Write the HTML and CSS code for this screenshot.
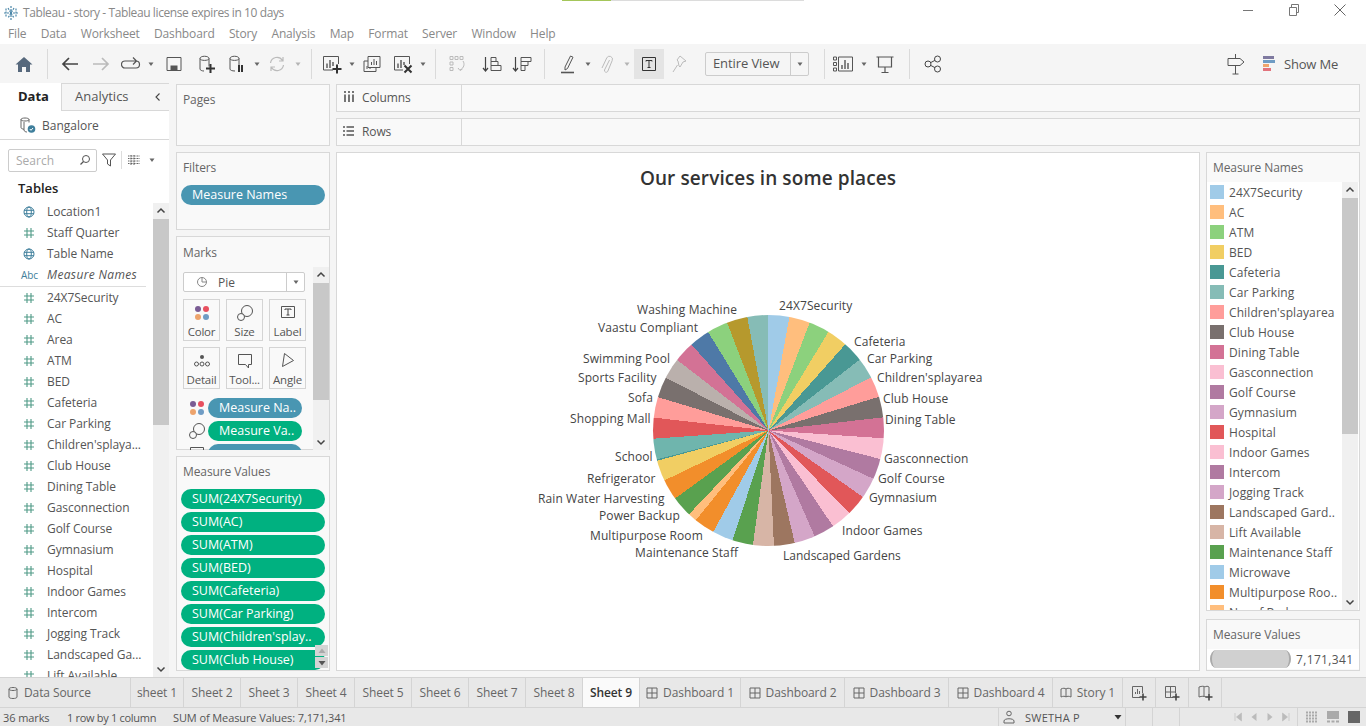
FILE: index.html
```html
<!DOCTYPE html>

<html>
  <head>
    <meta charset="utf-8" />
    <title>Tableau - story</title>
    <link rel="stylesheet" href="styles.css">
  </head>

  <body>
    <svg class="defs" width="0" height="0">
      <symbol id="hash" viewBox="0 0 12 12">
        <path d="M4 1v10M8 1v10M1 4h10M1 8h10" fill="none" stroke="#4f9a86" stroke-width="1.1"/>
      </symbol>
      <symbol id="globe" viewBox="0 0 12 12">
        <g fill="none" stroke="#3f7f9c" stroke-width="1">
          <circle cx="6" cy="6" r="5"/>
          <ellipse cx="6" cy="6" rx="2.3" ry="5"/>
          <path d="M1 4.3h10M1 7.7h10"/>
        </g>
      </symbol>
      <symbol id="up" viewBox="0 0 10 10">
        <path d="M1.5 6.5L5 3l3.5 3.5" fill="none" stroke="#444" stroke-width="1.5"/>
      </symbol>
      <symbol id="down" viewBox="0 0 10 10">
        <path d="M1.5 3.5L5 7l3.5-3.5" fill="none" stroke="#444" stroke-width="1.5"/>
      </symbol>
      <symbol id="dash" viewBox="0 0 12 12">
        <path d="M1 1h10v10H1zM6 1v10M1 6h10" fill="none" stroke="#666" stroke-width="1"/>
      </symbol>
      <symbol id="book" viewBox="0 0 12 12">
        <path d="M1 2c2-1 4-1 5 0c1-1 3-1 5 0v8c-2-1-4-1-5 0c-1-1-3-1-5 0zM6 2v8" fill="none" stroke="#666" stroke-width="1"/>
      </symbol>
      <symbol id="dd" viewBox="0 0 8 8">
        <path d="M1.5 2.5h5L4 6z" fill="#666"/>
      </symbol>
    </svg>

    <div class="app">
      <header class="titlebar">
        <svg class="logo" width="16" height="16" viewBox="0 0 16 16">
          <path d="M8 1v14M1 8h14M3 3.500v9M13 3.500v9M5 3l6 10M11 3L5 13" fill="none" stroke="#4a86a8" stroke-width="1.200" stroke-dasharray="2 1"/>
        </svg>
        <span class="app-title">Tableau - story - Tableau license expires in 10 days</span>
        <div class="progress"><div class="progress-done"></div></div>
        <div class="win-controls">
          <svg width="12" height="12" viewBox="0 0 12 12"><path d="M1 6.500h10" stroke="#777"/></svg>
          <svg width="12" height="12" viewBox="0 0 12 12"><path d="M1.500 3.500h7v8h-7zM3.500 3.500V.5h7v8h-2" fill="none" stroke="#777"/></svg>
          <svg width="12" height="12" viewBox="0 0 12 12"><path d="M.5.5l11 11M11.500.5l-11 11" stroke="#666"/></svg>
        </div>
      </header>

      <nav class="menubar">
        <span>File</span><span>Data</span><span>Worksheet</span><span>Dashboard</span><span>Story</span><span>Analysis</span><span>Map</span><span>Format</span><span>Server</span><span>Window</span><span>Help</span>
      </nav>

      <div class="toolbar">
        <div class="tool tool-first">
          <svg width="20" height="20" viewBox="0 0 20 20"><path d="M1.500 10.500L10 3l8.500 7.500H16V18h-4v-5H8v5H4v-7.500z" fill="#56687c"/></svg>
        </div>
        <i class="sep sep-home"></i>
        <div class="tool">
          <svg width="20" height="20" viewBox="0 0 20 20"><path d="M18 10H3M9 4l-6 6 6 6" fill="none" stroke="#444" stroke-width="1.700"/></svg>
        </div>
        <div class="tool tool-fwd">
          <svg width="20" height="20" viewBox="0 0 20 20"><path d="M2 10h15M11 4l6 6-6 6" fill="none" stroke="#bbb" stroke-width="1.700"/></svg>
        </div>
        <div class="tool">
          <svg width="20" height="20" viewBox="0 0 20 20"><path d="M4 7h11a3.500 3.500 0 0 1 0 7H4a3.500 3.500 0 0 1 0-7M12 3.500L15.500 7 12 10.500" fill="none" stroke="#555" stroke-width="1.200"/></svg>
        </div>
        <div class="drop"><svg width="8" height="8"><use href="#dd"/></svg></div>
        <div class="tool tool-gap">
          <svg width="18" height="18" viewBox="0 0 18 18"><path d="M2 2.500h14v13H2z" fill="none" stroke="#555"/><path d="M5.500 10.500h7v5h-7z" fill="#555"/></svg>
        </div>
        <div class="tool tool-gap">
          <svg width="20" height="20" viewBox="0 0 20 20"><path d="M3 4.500c0-3 9-3 9 0v8M3 4.500c0 2.500 9 2.500 9 0M3 4.500V15c0 1.200 2 2 4 2" fill="none" stroke="#555"/><path d="M13.500 10v9M9 14.500h9" stroke="#333" stroke-width="2"/></svg>
        </div>
        <div class="tool">
          <svg width="20" height="20" viewBox="0 0 20 20"><path d="M3 4.500c0-3 9-3 9 0v8M3 4.500c0 2.500 9 2.500 9 0M3 4.500V15c0 1.200 2 2 5 2" fill="none" stroke="#555"/><path d="M12 11v7M15 11v7" stroke="#333" stroke-width="2"/></svg>
        </div>
        <div class="drop"><svg width="8" height="8"><use href="#dd"/></svg></div>
        <div class="tool">
          <svg width="20" height="20" viewBox="0 0 20 20"><path d="M3.500 9a6.500 6.500 0 0 1 12-2.500M16.500 11a6.500 6.500 0 0 1-12 2.500M16 3v4h-4M4 17v-4h4" fill="none" stroke="#bbb" stroke-width="1.200"/></svg>
        </div>
        <div class="drop drop-off"><svg width="8" height="8"><use href="#dd"/></svg></div>
        <i class="sep sep-chart"></i>
        <div class="tool">
          <svg width="20" height="20" viewBox="0 0 20 20"><path d="M11 16H1.500V2.500h15V10" fill="none" stroke="#555"/><path d="M5 9.500V14M8 6v8M11 8v4" stroke="#555" stroke-width="1.400"/><path d="M15 10.500v9M10.500 15h9" stroke="#333" stroke-width="2"/></svg>
        </div>
        <div class="drop"><svg width="8" height="8"><use href="#dd"/></svg></div>
        <div class="tool">
          <svg width="20" height="20" viewBox="0 0 20 20"><path d="M6 2.500h12v11H6zM6 7H2v10.500h12v-4" fill="none" stroke="#555"/><path d="M9.500 11V8M12 11V5M14.500 11V7M5 15v-3M8 15v-2" stroke="#555"/></svg>
        </div>
        <div class="tool tool-near">
          <svg width="20" height="20" viewBox="0 0 20 20"><path d="M10 16H1.500V2.500h15V10" fill="none" stroke="#555"/><path d="M5 9.500V14M8 6v8M11 8v3" stroke="#555" stroke-width="1.400"/><path d="M11.500 11.500l7 7M18.500 11.500l-7 7" stroke="#333" stroke-width="2"/></svg>
        </div>
        <div class="drop"><svg width="8" height="8"><use href="#dd"/></svg></div>
        <i class="sep"></i>
        <div class="tool">
          <svg width="20" height="20" viewBox="0 0 20 20"><path d="M3 2.500h3v3H3zM8 2.500h3v3H8zM13 2.500h3v3h-3zM3 8h3v3H3zM3 13.500h3v3H3z" fill="none" stroke="#bbb"/><path d="M16 7c2 3 1 7-3 9M11 14l2 2.500 2.500-1.500" fill="none" stroke="#bbb"/></svg>
        </div>
        <div class="tool tool-sort">
          <svg width="20" height="20" viewBox="0 0 20 20"><path d="M3.500 3v14M1 14l2.500 3L6 14" fill="none" stroke="#444" stroke-width="1.200"/><path d="M9 3.500h5v4H9zM9 7.500h7v4H9zM9 11.500h10v5H9z" fill="none" stroke="#555"/></svg>
        </div>
        <div class="tool">
          <svg width="20" height="20" viewBox="0 0 20 20"><path d="M3.500 3v14M1 14l2.500 3L6 14" fill="none" stroke="#444" stroke-width="1.200"/><path d="M9 3.500h10v4H9zM9 7.500h7v4H9zM9 11.500h4v5H9z" fill="none" stroke="#555"/></svg>
        </div>
        <i class="sep sep-sort"></i>
        <div class="tool tool-pen">
          <svg width="20" height="20" viewBox="0 0 20 20"><path d="M7 13L12.500 2l2.500 1.200L9.500 14.500 7 16z" fill="none" stroke="#555"/><path d="M3 18.500h13" stroke="#555" stroke-width="1.600"/></svg>
        </div>
        <div class="drop"><svg width="8" height="8"><use href="#dd"/></svg></div>
        <div class="tool tool-clip">
          <svg width="20" height="20" viewBox="0 0 20 20"><path d="M13.500 6l-5 10a1.800 1.800 0 0 0 3.200 1.500l4.500-11a3 3 0 0 0-5.500-2.500L6 14" fill="none" stroke="#bbb"/></svg>
        </div>
        <div class="drop drop-off"><svg width="8" height="8"><use href="#dd"/></svg></div>
        <div class="tool tool-on">
          <svg width="18" height="18" viewBox="0 0 18 18"><path d="M2.500 2.500h13v13h-13z" fill="none" stroke="#333"/><path d="M6 6.500V5.500h6v1M9 5.500v7M7.500 12.500h3" fill="none" stroke="#333"/></svg>
        </div>
        <div class="tool">
          <svg width="20" height="20" viewBox="0 0 20 20"><path d="M11 2l6 5-3 1-3 5-1-1-1-5-1-1zM8.500 11L4 18" fill="none" stroke="#bbb"/></svg>
        </div>
        <div class="fit-select">
          <span class="fit-value">Entire View</span>
          <span class="fit-arrow"><svg width="8" height="8"><use href="#dd"/></svg></span>
        </div>
        <i class="sep sep-fit"></i>
        <div class="tool">
          <svg width="22" height="20" viewBox="0 0 22 20"><path d="M1.500 3h3v3h-3zM1.500 8.500h3v3h-3zM1.500 14h3v3h-3zM6.500 3h14v14h-14z" fill="none" stroke="#555"/><path d="M10 15v-4M13 15V6M16 15v-6" stroke="#555" stroke-width="1.400"/></svg>
        </div>
        <div class="drop drop-view"><svg width="8" height="8"><use href="#dd"/></svg></div>
        <div class="tool">
          <svg width="20" height="20" viewBox="0 0 20 20"><path d="M1.500 3h17M3.500 3v10h13V3M10 13v5M6.500 18.500h7" fill="none" stroke="#555" stroke-width="1.200"/></svg>
        </div>
        <i class="sep sep-share"></i>
        <div class="tool tool-share">
          <svg width="20" height="20" viewBox="0 0 20 20"><g fill="none" stroke="#444"><circle cx="5" cy="10" r="3"/><circle cx="14.500" cy="5" r="3"/><circle cx="14.500" cy="15" r="3"/><path d="M7.700 8.600l4.200-2.200M7.700 11.400l4.200 2.200"/></g></svg>
        </div>
        <div class="tool-right">
          <svg width="20" height="22" viewBox="0 0 20 22"><path d="M2 5.500h12l4 3.500-4 3.500H2zM9.500 1v4.500M9.500 12.500V21M6.500 21h6" fill="none" stroke="#555"/></svg>
          <div class="show-me">
            <svg width="12" height="20" viewBox="0 0 12 20"><path d="M0 2h11v3H0z" fill="#7f7aa0"/><path d="M0 6h14v3H0z" fill="#6f9cc4"/><path d="M0 10h6v3H0z" fill="#efa56c"/><path d="M0 14h8v3H0z" fill="#e2737c"/></svg>
            <span>Show Me</span>
          </div>
        </div>
      </div>

      <main class="workspace">
        <aside class="data-pane">
          <div class="pane-tabs">
            <div class="pane-tab pane-tab-on">Data</div>
            <div class="pane-tab">Analytics</div>
            <div class="pane-collapse">
              <svg width="10" height="10" viewBox="0 0 10 10"><path d="M6.500 1.500L3 5l3.500 3.500" fill="none" stroke="#444" stroke-width="1.100"/></svg>
            </div>
          </div>
          <div class="source">
            <svg width="18" height="18" viewBox="0 0 18 18"><path d="M2 3.500c0-2 8-2 8 0v3M2 3.500c0 2 8 2 8 0M2 3.500v8c0 1 1.500 1.500 3 1.800M5 6v8c0 1.500 2 2 3 2" fill="none" stroke="#666"/><circle cx="12.500" cy="13" r="3.800" fill="#3f7f9c"/><path d="M10.800 13l1.200 1.300 2-2.300" fill="none" stroke="#fff"/></svg>
            <span>Bangalore</span>
          </div>
          <div class="search-row">
            <div class="search">
              <span>Search</span>
              <svg width="12" height="12" viewBox="0 0 12 12"><circle cx="7" cy="5" r="3.500" fill="none" stroke="#555"/><path d="M4.500 7.500L1.500 10.500" stroke="#555" stroke-width="1.300"/></svg>
            </div>
            <svg class="funnel" width="14" height="14" viewBox="0 0 14 14"><path d="M.5 1h13L8.500 7v6l-3-2V7z" fill="none" stroke="#555"/></svg>
            <i class="search-sep"></i>
            <svg class="rows-icon" width="12" height="10" viewBox="0 0 12 10"><path d="M0 1h12M0 3.500h12M0 6h12M0 8.500h12M3 0v10M6 0v10" stroke="#666" stroke-dasharray="1 .5"/></svg>
            <svg class="rows-drop" width="8" height="8"><use href="#dd"/></svg>
          </div>
          <div class="tables-head">Tables</div>
          <div class="fields-wrap">
            <ul class="fields">
              <li><svg width="12" height="12"><use href="#globe"/></svg>Location1</li>
              <li><svg width="12" height="12"><use href="#hash"/></svg>Staff Quarter</li>
              <li><svg width="12" height="12"><use href="#globe"/></svg>Table Name</li>
              <li class="field-names"><b>Abc</b><em>Measure Names</em></li>
              <li><svg width="12" height="12"><use href="#hash"/></svg>24X7Security</li>
              <li><svg width="12" height="12"><use href="#hash"/></svg>AC</li>
              <li><svg width="12" height="12"><use href="#hash"/></svg>Area</li>
              <li><svg width="12" height="12"><use href="#hash"/></svg>ATM</li>
              <li><svg width="12" height="12"><use href="#hash"/></svg>BED</li>
              <li><svg width="12" height="12"><use href="#hash"/></svg>Cafeteria</li>
              <li><svg width="12" height="12"><use href="#hash"/></svg>Car Parking</li>
              <li><svg width="12" height="12"><use href="#hash"/></svg>Children'splaya...</li>
              <li><svg width="12" height="12"><use href="#hash"/></svg>Club House</li>
              <li><svg width="12" height="12"><use href="#hash"/></svg>Dining Table</li>
              <li><svg width="12" height="12"><use href="#hash"/></svg>Gasconnection</li>
              <li><svg width="12" height="12"><use href="#hash"/></svg>Golf Course</li>
              <li><svg width="12" height="12"><use href="#hash"/></svg>Gymnasium</li>
              <li><svg width="12" height="12"><use href="#hash"/></svg>Hospital</li>
              <li><svg width="12" height="12"><use href="#hash"/></svg>Indoor Games</li>
              <li><svg width="12" height="12"><use href="#hash"/></svg>Intercom</li>
              <li><svg width="12" height="12"><use href="#hash"/></svg>Jogging Track</li>
              <li><svg width="12" height="12"><use href="#hash"/></svg>Landscaped Ga...</li>
              <li><svg width="12" height="12"><use href="#hash"/></svg>Lift Available</li>
            </ul>
            <div class="scroll">
              <div class="scroll-arrow"><svg width="10" height="10"><use href="#up"/></svg></div>
              <div class="thumb thumb-fields"></div>
              <div class="scroll-rest"></div>
              <div class="scroll-arrow"><svg width="10" height="10"><use href="#down"/></svg></div>
            </div>
          </div>
        </aside>

        <section class="cards">
          <div class="card card-pages"><h4>Pages</h4></div>
          <div class="card card-filters">
            <h4>Filters</h4>
            <div class="pill pill-blue">Measure Names</div>
          </div>
          <div class="card card-marks">
            <h4>Marks</h4>
            <div class="marks-body">
              <div class="marks-main">
                <div class="mark-type">
                  <svg width="14" height="14" viewBox="0 0 14 14"><circle cx="7" cy="7" r="4.500" fill="none" stroke="#888"/><path d="M7 2.500V7h4.500" fill="none" stroke="#888"/></svg>
                  <span>Pie</span>
                  <i class="mark-arrow"><svg width="8" height="8"><use href="#dd"/></svg></i>
                </div>
                <div class="mark-grid">
                  <div class="mark-btn">
                    <svg width="18" height="18" viewBox="0 0 18 18"><circle cx="5" cy="5" r="3" fill="#7a5c94"/><circle cx="13" cy="5" r="3" fill="#e8505f"/><circle cx="5" cy="13" r="3" fill="#eda36c"/><circle cx="13" cy="13" r="3" fill="#6f9cc4"/></svg>
                    <span>Color</span>
                  </div>
                  <div class="mark-btn">
                    <svg width="18" height="18" viewBox="0 0 18 18"><circle cx="11" cy="7" r="5.500" fill="none" stroke="#555"/><circle cx="5" cy="13" r="3.500" fill="#fafafa" stroke="#555"/></svg>
                    <span>Size</span>
                  </div>
                  <div class="mark-btn">
                    <svg width="18" height="18" viewBox="0 0 18 18"><path d="M2.500 2.500h13v11h-13z" fill="none" stroke="#555"/><path d="M6 6V5h6v1M9 5v6M7.500 11h3" fill="none" stroke="#444"/></svg>
                    <span>Label</span>
                  </div>
                  <div class="mark-btn">
                    <svg width="18" height="18" viewBox="0 0 18 18"><circle cx="9" cy="5" r="2" fill="#555"/><g fill="none" stroke="#555"><circle cx="3.500" cy="12" r="2"/><circle cx="9" cy="12" r="2"/><circle cx="14.500" cy="12" r="2"/></g></svg>
                    <span>Detail</span>
                  </div>
                  <div class="mark-btn">
                    <svg width="18" height="18" viewBox="0 0 18 18"><path d="M2.500 2.500h13v10h-3v3.500l-3-3.500h-7z" fill="none" stroke="#555"/></svg>
                    <span>Tool...</span>
                  </div>
                  <div class="mark-btn">
                    <svg width="18" height="18" viewBox="0 0 18 18"><path d="M5.500 1.500l9 7-11 6z" fill="none" stroke="#555"/></svg>
                    <span>Angle</span>
                  </div>
                </div>
                <div class="mark-pill-row">
                  <svg width="18" height="18" viewBox="0 0 18 18"><circle cx="5" cy="5" r="3" fill="#7a5c94"/><circle cx="13" cy="5" r="3" fill="#e8505f"/><circle cx="5" cy="13" r="3" fill="#eda36c"/><circle cx="13" cy="13" r="3" fill="#6f9cc4"/></svg>
                  <div class="pill pill-blue">Measure Na..</div>
                </div>
                <div class="mark-pill-row">
                  <svg width="18" height="18" viewBox="0 0 18 18"><circle cx="11" cy="7" r="5.500" fill="none" stroke="#555"/><circle cx="5" cy="13" r="3.500" fill="#fafafa" stroke="#555"/></svg>
                  <div class="pill pill-green">Measure Va..</div>
                </div>
                <div class="mark-pill-row">
                  <svg width="18" height="18" viewBox="0 0 18 18"><path d="M2.500 2.500h13v11h-13z" fill="none" stroke="#555"/></svg>
                  <div class="pill pill-blue">&nbsp;</div>
                </div>
              </div>
              <div class="scroll scroll-marks">
                <div class="scroll-arrow"><svg width="10" height="10"><use href="#up"/></svg></div>
                <div class="thumb thumb-marks"></div>
                <div class="scroll-rest"></div>
                <div class="scroll-arrow"><svg width="10" height="10"><use href="#down"/></svg></div>
              </div>
            </div>
          </div>
          <div class="card card-values">
            <h4>Measure Values</h4>
            <div class="value-pills">
              <div class="pill pill-green">SUM(24X7Security)</div>
              <div class="pill pill-green">SUM(AC)</div>
              <div class="pill pill-green">SUM(ATM)</div>
              <div class="pill pill-green">SUM(BED)</div>
              <div class="pill pill-green">SUM(Cafeteria)</div>
              <div class="pill pill-green">SUM(Car Parking)</div>
              <div class="pill pill-green">SUM(Children'splay..</div>
              <div class="pill pill-green">SUM(Club House)</div>
            </div>
            <div class="mini-scroll">
              <div class="mini-arrow"><svg width="8" height="8" viewBox="0 0 8 8"><path d="M4 1.500L7.500 6H.5z" fill="#aaa"/></svg></div>
              <div class="mini-arrow"><svg width="8" height="8" viewBox="0 0 8 8"><path d="M4 6.500L7.500 2H.5z" fill="#555"/></svg></div>
            </div>
          </div>
        </section>

        <section class="center">
          <div class="shelf">
            <div class="shelf-label">
              <svg width="12" height="12" viewBox="0 0 12 12"><path d="M2 3.500V11M6 3.500V11M10 3.500V11M2 0v2M6 0v2M10 0v2" stroke="#555" stroke-width="1.600"/></svg>
              <span>Columns</span>
            </div>
            <div class="shelf-drop"></div>
          </div>
          <div class="shelf">
            <div class="shelf-label">
              <svg width="12" height="12" viewBox="0 0 12 12"><path d="M3.500 2H11M3.500 6H11M3.500 10H11M0 2h2M0 6h2M0 10h2" stroke="#555" stroke-width="1.600"/></svg>
              <span>Rows</span>
            </div>
            <div class="shelf-drop"></div>
          </div>

          <div class="view-row">
            <div class="view">
              <h2 class="view-title">Our services in some places</h2>
              <div class="plot">
                <div class="pie"></div>
                <span class="pie-label lb-washing">Washing Machine</span>
                <span class="pie-label lb-security">24X7Security</span>
                <span class="pie-label lb-vaastu">Vaastu Compliant</span>
                <span class="pie-label lb-cafeteria">Cafeteria</span>
                <span class="pie-label lb-car">Car Parking</span>
                <span class="pie-label lb-swimming">Swimming Pool</span>
                <span class="pie-label lb-children">Children'splayarea</span>
                <span class="pie-label lb-sports">Sports Facility</span>
                <span class="pie-label lb-sofa">Sofa</span>
                <span class="pie-label lb-club">Club House</span>
                <span class="pie-label lb-shopping">Shopping Mall</span>
                <span class="pie-label lb-dining">Dining Table</span>
                <span class="pie-label lb-school">School</span>
                <span class="pie-label lb-gas">Gasconnection</span>
                <span class="pie-label lb-fridge">Refrigerator</span>
                <span class="pie-label lb-golf">Golf Course</span>
                <span class="pie-label lb-gym">Gymnasium</span>
                <span class="pie-label lb-rain">Rain Water Harvesting</span>
                <span class="pie-label lb-power">Power Backup</span>
                <span class="pie-label lb-indoor">Indoor Games</span>
                <span class="pie-label lb-multi">Multipurpose Room</span>
                <span class="pie-label lb-staff">Maintenance Staff</span>
                <span class="pie-label lb-gardens">Landscaped Gardens</span>
              </div>
            </div>

            <div class="legends">
              <div class="card legend-names">
                <h4>Measure Names</h4>
                <div class="legend-body">
                  <ul class="legend-list">
                    <li><i class="sw c-blue"></i>24X7Security</li>
                    <li><i class="sw c-peach"></i>AC</li>
                    <li><i class="sw c-lime"></i>ATM</li>
                    <li><i class="sw c-yellow"></i>BED</li>
                    <li><i class="sw c-teal"></i>Cafeteria</li>
                    <li><i class="sw c-mint"></i>Car Parking</li>
                    <li><i class="sw c-salmon"></i>Children'splayarea</li>
                    <li><i class="sw c-umber"></i>Club House</li>
                    <li><i class="sw c-rose"></i>Dining Table</li>
                    <li><i class="sw c-pink"></i>Gasconnection</li>
                    <li><i class="sw c-plum"></i>Golf Course</li>
                    <li><i class="sw c-lilac"></i>Gymnasium</li>
                    <li><i class="sw c-red"></i>Hospital</li>
                    <li><i class="sw c-pink"></i>Indoor Games</li>
                    <li><i class="sw c-plum"></i>Intercom</li>
                    <li><i class="sw c-lilac"></i>Jogging Track</li>
                    <li><i class="sw c-brown"></i>Landscaped Gard..</li>
                    <li><i class="sw c-tan"></i>Lift Available</li>
                    <li><i class="sw c-green"></i>Maintenance Staff</li>
                    <li><i class="sw c-blue"></i>Microwave</li>
                    <li><i class="sw c-orange"></i>Multipurpose Roo..</li>
                    <li><i class="sw c-peach"></i>No. of Bedrooms</li>
                  </ul>
                  <div class="scroll scroll-legend">
                    <div class="scroll-arrow"><svg width="10" height="10"><use href="#up"/></svg></div>
                    <div class="thumb thumb-legend"></div>
                    <div class="scroll-rest"></div>
                    <div class="scroll-arrow"><svg width="10" height="10"><use href="#down"/></svg></div>
                  </div>
                </div>
              </div>
              <div class="card legend-values">
                <h4>Measure Values</h4>
                <div class="size-row">
                  <div class="size-bar"></div>
                  <span>7,171,341</span>
                </div>
              </div>
            </div>
          </div>
        </section>
      </main>

      <div class="tabs">
        <div class="tab tab-source">
          <svg width="12" height="14" viewBox="0 0 12 14"><path d="M2 3c0-2 8-2 8 0v8c0 2-8 2-8 0zM2 3c0 2 8 2 8 0" fill="none" stroke="#666"/></svg>
          Data Source
        </div>
        <div class="tab tab-sheet1">sheet 1</div>
        <div class="tab">Sheet 2</div>
        <div class="tab">Sheet 3</div>
        <div class="tab">Sheet 4</div>
        <div class="tab">Sheet 5</div>
        <div class="tab">Sheet 6</div>
        <div class="tab">Sheet 7</div>
        <div class="tab">Sheet 8</div>
        <div class="tab tab-on">Sheet 9</div>
        <div class="tab tab-dash"><svg width="12" height="12"><use href="#dash"/></svg>Dashboard 1</div>
        <div class="tab tab-dash"><svg width="12" height="12"><use href="#dash"/></svg>Dashboard 2</div>
        <div class="tab tab-dash"><svg width="12" height="12"><use href="#dash"/></svg>Dashboard 3</div>
        <div class="tab tab-dash"><svg width="12" height="12"><use href="#dash"/></svg>Dashboard 4</div>
        <div class="tab tab-story"><svg width="12" height="12"><use href="#book"/></svg>Story 1</div>
        <div class="tab tab-add">
          <svg width="18" height="18" viewBox="0 0 18 18"><path d="M10 13.500H2.500v-11h10V9" fill="none" stroke="#666"/><path d="M5.500 10V8M7.500 10V5M9.500 10V7" stroke="#666"/><path d="M13 9.500v7M9.500 13h7" stroke="#444" stroke-width="1.600"/></svg>
        </div>
        <div class="tab tab-add">
          <svg width="18" height="18" viewBox="0 0 18 18"><path d="M10 13.500H2.500v-11h10V9M7.500 2.500v11M2.500 8h10" fill="none" stroke="#666"/><path d="M13 9.500v7M9.500 13h7" stroke="#444" stroke-width="1.600"/></svg>
        </div>
        <div class="tab tab-add">
          <svg width="18" height="18" viewBox="0 0 18 18"><path d="M10 13c-2-1-4-1-7 0V3c3-1 5-1 6 0 1-1 3-1 4 0v6M8 3v10" fill="none" stroke="#666"/><path d="M13 9.500v7M9.500 13h7" stroke="#444" stroke-width="1.600"/></svg>
        </div>
      </div>

      <footer class="status">
        <span class="st-marks">36 marks</span>
        <span class="st-rows">1 row by 1 column</span>
        <span>SUM of Measure Values: 7,171,341</span>
        <div class="st-user">
          <svg width="12" height="14" viewBox="0 0 12 14"><circle cx="6" cy="3.500" r="2.300" fill="none" stroke="#666"/><path d="M1 13v-2c0-3 10-3 10 0v2z" fill="none" stroke="#666"/></svg>
          <span class="st-name">SWETHA P</span>
          <svg width="8" height="8" viewBox="0 0 8 8"><path d="M.5 2h7L4 6.500z" fill="#333"/></svg>
        </div>
        <i class="st-cell"></i>
        <i class="st-cell"></i>
        <div class="st-nav">
          <svg width="10" height="10" viewBox="0 0 10 10"><path d="M2 1v8M8.500 1v8L3.500 5z" fill="#bbb" stroke="#bbb" stroke-width=".6"/></svg>
          <svg width="10" height="10" viewBox="0 0 10 10"><path d="M7.500 1v8L2.500 5z" fill="#bbb"/></svg>
          <svg width="10" height="10" viewBox="0 0 10 10"><path d="M2.500 1v8l5-4z" fill="#bbb"/></svg>
          <svg width="10" height="10" viewBox="0 0 10 10"><path d="M8 1v8M1.500 1v8L6.500 5z" fill="#bbb" stroke="#bbb" stroke-width=".6"/></svg>
        </div>
        <div class="st-views">
          <svg width="12" height="12" viewBox="0 0 12 12"><path d="M0 1.500h12M0 4.500h12M0 7.500h12M0 10.500h12" stroke="#aaa" stroke-width="2" stroke-dasharray="2 1"/></svg>
          <svg width="12" height="12" viewBox="0 0 12 12"><path d="M0 0h12v8H0z" fill="#aaa"/><path d="M0 10.500h12" stroke="#aaa" stroke-width="2" stroke-dasharray="3 1.500"/></svg>
          <svg width="12" height="12" viewBox="0 0 12 12"><path d="M0 0h12v12H0z" fill="#666"/></svg>
        </div>
      </footer>
    </div>
  </body>
</html>
```

FILE: styles.css
```css
* {
  box-sizing: border-box;
}

html,
body {
  margin: 0;
  height: 100%;
  background: #f5f5f5;
}

body {
  font-family: "Open Sans", "Liberation Sans", sans-serif;
  font-size: 12px;
  color: #555;
}

.defs {
  position: absolute;
}

svg {
  flex: none;
  display: block;
}

.app {
  display: flex;
  flex-direction: column;
  width: 1366px;
  height: 726px;
  overflow: hidden;
}

/* window chrome */
.titlebar {
  position: relative;
  display: flex;
  align-items: center;
  flex: none;
  height: 22px;
  padding: 3px 0 0 3px;
  background: #fff;
  color: #888;
}

.app-title {
  margin-left: 4px;
  letter-spacing: -0.4px;
}

.progress {
  position: absolute;
  top: 0;
  left: 562px;
  width: 242px;
  height: 1px;
  background: #dcdcdc;
}

.progress-done {
  width: 49px;
  height: 1px;
  background: #a4c65a;
}

.win-controls {
  display: flex;
  gap: 34px;
  margin-left: auto;
  margin-right: 20px;
  margin-top: -6px;
}

.menubar {
  display: flex;
  align-items: center;
  flex: none;
  gap: 14.3px;
  height: 22px;
  padding-left: 8px;
  background: #fff;
  color: #888;
}

.menubar span {
  letter-spacing: -0.15px;
}

.toolbar {
  display: flex;
  align-items: center;
  flex: none;
  height: 39px;
  background: #f5f5f5;
}

.tool {
  display: flex;
  align-items: center;
  justify-content: center;
  flex: none;
  width: 30px;
  height: 30px;
}

.tool-first {
  margin-left: 9px;
}

.tool-fwd {
  margin-left: 1px;
}

.tool-gap {
  margin-left: 3px;
}

.tool-near {
  margin-left: 1px;
}

.tool-sort {
  margin-left: 5px;
}

.tool-pen {
  margin-left: 8px;
}

.tool-clip {
  margin-left: -2px;
}

.tool-on {
  background: #e4e4e4;
  margin-left: 1px;
}

.tool-share {
  margin-left: 8px;
}

.drop {
  display: flex;
  align-items: center;
  justify-content: center;
  flex: none;
  width: 10px;
}

.drop-off {
  width: 12px;
  opacity: 0.45;
}

.drop-view {
  width: 12px;
}

.sep {
  flex: none;
  width: 1px;
  height: 30px;
  margin: 0 6px 0 7px;
  background: #dadada;
}

.sep-home {
  margin: 0 7px 0 8px;
}

.sep-chart {
  margin: 0 5px 0 7px;
}

.sep-sort {
  margin: 0 0 0 7px;
}

.sep-fit {
  margin: 0 3px 0 15px;
}

.sep-share {
  margin: 0 0 0 9px;
}

.fit-select {
  display: flex;
  align-items: center;
  width: 104px;
  height: 24px;
  margin-left: 11px;
  border: 1px solid #ccc;
  border-radius: 2px;
  font-size: 13px;
}

.fit-value {
  flex: 1;
  padding: 0 0 2px 7px;
  letter-spacing: -0.1px;
}

.fit-arrow {
  display: flex;
  align-items: center;
  justify-content: center;
  width: 18px;
  height: 100%;
  border-left: 1px solid #ccc;
}

.tool-right {
  display: flex;
  align-items: center;
  gap: 17px;
  margin-left: auto;
  margin-right: 28px;
}

.show-me {
  display: flex;
  align-items: center;
  gap: 9px;
  font-size: 13px;
  letter-spacing: -0.2px;
}

/* main area */
.workspace {
  display: flex;
  flex: 1;
  min-height: 0;
  padding-top: 1px;
}

.data-pane {
  display: flex;
  flex-direction: column;
  flex: none;
  width: 169px;
  margin-top: -1px;
  background: #fff;
}

.pane-tabs {
  display: flex;
  flex: none;
  height: 28px;
  background: #f5f5f5;
}

.pane-tab {
  display: flex;
  align-items: center;
  width: 85px;
  padding: 0 0 2px 13px;
  border-top: 1px solid #d8d8d8;
  border-bottom: 1px solid #d8d8d8;
  border-left: 1px solid #d8d8d8;
  font-size: 13px;
}

.pane-tab-on {
  width: 61px;
  padding-left: 18px;
  border: 0;
  background: #fff;
  color: #222;
  font-weight: 700;
}

.pane-collapse {
  display: flex;
  align-items: center;
  justify-content: center;
  flex: 1;
  border-top: 1px solid #d8d8d8;
  border-bottom: 1px solid #d8d8d8;
}

.source {
  display: flex;
  align-items: center;
  flex: none;
  gap: 5px;
  height: 29px;
  padding-left: 19px;
  border-bottom: 1px solid #d8d8d8;
}

.search-row {
  display: flex;
  align-items: center;
  flex: none;
  height: 40px;
  padding: 0 0 0 8px;
}

.search {
  display: flex;
  align-items: center;
  justify-content: space-between;
  width: 89px;
  height: 23px;
  padding: 0 5px 0 7px;
  border: 1px solid #ccc;
  border-radius: 2px;
  color: #aaa;
}

.funnel {
  margin-left: 5px;
}

.search-sep {
  width: 1px;
  height: 18px;
  margin-left: 5px;
  background: #ddd;
}

.rows-icon {
  margin-left: 6px;
}

.rows-drop {
  margin-left: 8px;
}

.tables-head {
  flex: none;
  height: 21px;
  padding-left: 18px;
  color: #222;
  font-size: 13px;
  font-weight: 600;
  line-height: 16px;
}

.fields-wrap {
  display: flex;
  flex: 1;
  min-height: 0;
  overflow: hidden;
}

.fields {
  flex: 1;
  margin: 0;
  padding: 0;
  list-style: none;
  letter-spacing: -0.05px;
}

.fields li {
  display: flex;
  align-items: center;
  flex: none;
  height: 21px;
  padding-left: 23px;
  white-space: nowrap;
}

.fields li svg {
  margin-right: 12px;
}

.fields .field-names {
  height: 23px;
  padding: 0 0 1px 21px;
  margin-left: 0;
  border-bottom: 1px solid #ddd;
  margin-right: 7px;
}

.field-names b {
  width: 26px;
  color: #3f7f9c;
  font-size: 10px;
  font-weight: 400;
}

.field-names em {
  letter-spacing: 0.35px;
}

.scroll {
  display: flex;
  flex-direction: column;
  flex: none;
  width: 16px;
  margin-top: 2px;
  background: #f0f0f0;
}

.scroll-arrow {
  display: flex;
  align-items: center;
  justify-content: center;
  flex: none;
  height: 16px;
}

.scroll-rest {
  flex: 1;
}

.thumb {
  flex: none;
  background: #c8c8c8;
}

.thumb-fields {
  height: 206px;
}

.thumb-marks {
  height: 117px;
}

.thumb-legend {
  height: 236px;
}

/* cards */
.cards {
  display: flex;
  flex-direction: column;
  flex: none;
  gap: 6px;
  width: 154px;
  margin-left: 7px;
}

.card {
  position: relative;
  flex: none;
  border: 1px solid #d8d8d8;
  background: #f9f9f9;
}

.card h4 {
  margin: 0;
  padding: 7px 6px 0;
  color: #666;
  font-size: 12px;
  font-weight: 400;
  line-height: 15px;
  letter-spacing: -0.1px;
}

.card-pages {
  height: 62px;
}

.card-filters {
  height: 78px;
}

.card-filters .pill {
  margin: 10px 4px 0;
}

.card-marks {
  height: 214px;
}

.card-marks h4 {
  padding-top: 8px;
}

.card-values {
  height: 215px;
}

.pill {
  height: 20px;
  padding-left: 11px;
  border-radius: 10px;
  color: #fff;
  font-size: 12.5px;
  line-height: 20px;
  white-space: nowrap;
  overflow: hidden;
}

.pill-blue {
  background: #4996b2;
}

.pill-green {
  background: #00b180;
}

.marks-body {
  display: flex;
  height: 183px;
  margin-top: 7px;
  overflow: hidden;
}

.marks-main {
  flex: none;
  width: 136px;
  padding: 5px 0 0 6px;
}

.mark-type {
  display: flex;
  align-items: center;
  height: 20px;
  width: 122px;
  padding-left: 11px;
  border: 1px solid #ccc;
  border-radius: 2px;
  background: #fff;
}

.mark-type span {
  margin-left: 9px;
}

.mark-arrow {
  display: flex;
  align-items: center;
  justify-content: center;
  width: 18px;
  height: 100%;
  margin-left: auto;
  border-left: 1px solid #ccc;
}

.mark-grid {
  display: grid;
  grid-template-columns: repeat(3, 37px);
  grid-auto-rows: 42px;
  gap: 6px;
  margin-top: 7px;
}

.mark-btn {
  display: flex;
  flex-direction: column;
  align-items: center;
  gap: 3px;
  padding-top: 4px;
  border: 1px solid #d4d4d4;
  font-size: 11.5px;
  line-height: 14px;
  letter-spacing: -0.2px;
}

.mark-pill-row {
  display: flex;
  align-items: center;
  gap: 2px;
  height: 23px;
  margin-left: 5px;
}

.mark-pill-row .pill {
  width: 94px;
}

.mark-grid + .mark-pill-row {
  margin-top: 7px;
}

.scroll-marks {
  margin-top: 0;
}

.value-pills {
  display: flex;
  flex-direction: column;
  gap: 3px;
  height: 182px;
  margin: 10px 4px 0;
  overflow: hidden;
}

.value-pills .pill {
  flex: none;
}

.mini-scroll {
  position: absolute;
  right: 1px;
  bottom: 2px;
  display: flex;
  flex-direction: column;
  gap: 1px;
  width: 13px;
}

.mini-arrow {
  display: flex;
  align-items: center;
  justify-content: center;
  height: 11px;
  background: #d4d4d4;
}

/* shelves and view */
.center {
  display: flex;
  flex-direction: column;
  flex: 1;
  min-width: 0;
  gap: 6px;
  margin-left: 6px;
  margin-right: 6px;
}

.shelf {
  display: flex;
  flex: none;
  height: 28px;
  border: 1px solid #d8d8d8;
  background: #f9f9f9;
}

.shelf-label {
  display: flex;
  align-items: center;
  gap: 7px;
  width: 125px;
  padding: 0 0 2px 6px;
  border-right: 1px solid #d8d8d8;
  letter-spacing: -0.1px;
}

.shelf-drop {
  flex: 1;
}

.view-row {
  display: flex;
  gap: 6px;
  height: 519px;
}

.view {
  display: flex;
  flex-direction: column;
  flex: none;
  width: 864px;
  border: 1px solid #d8d8d8;
  background: #fff;
}

.view-title {
  flex: none;
  height: 37px;
  margin: 0;
  color: #333;
  font-size: 19px;
  font-weight: 600;
  line-height: 50px;
  text-align: center;
  letter-spacing: 0.1px;
}

.plot {
  position: relative;
  display: flex;
  align-items: center;
  justify-content: center;
  flex: 1;
}

.pie {
  width: 231px;
  height: 231px;
  border-radius: 50%;
  background: conic-gradient(
    #a0cbe8 0 10.43deg,
    #ffbe7d 0 20.86deg,
    #8cd17d 0 31.29deg,
    #f1ce63 0 41.72deg,
    #499894 0 52.15deg,
    #86bcb6 0 62.58deg,
    #ff9d9a 0 73.01deg,
    #79706e 0 83.44deg,
    #d37295 0 93.87deg,
    #fabfd2 0 104.3deg,
    #b07aa1 0 114.73deg,
    #d4a6c8 0 125.16deg,
    #e15759 0 135.59deg,
    #fabfd2 0 146.02deg,
    #b07aa1 0 156.45deg,
    #d4a6c8 0 166.88deg,
    #9d7660 0 177.31deg,
    #d7b5a6 0 187.74deg,
    #59a14f 0 198.17deg,
    #a0cbe8 0 208.6deg,
    #f28e2b 0 219.03deg,
    #ffbe7d 0 223.5deg,
    #59a14f 0 233.96deg,
    #f28e2b 0 244.39deg,
    #f1ce63 0 254.82deg,
    #499894 0 255.5deg,
    #6fb5ad 0 265.95deg,
    #e15759 0 276.4deg,
    #ff9d9a 0 286.8deg,
    #79706e 0 297.2deg,
    #bab0ac 0 307.65deg,
    #d37295 0 318.1deg,
    #4e79a7 0 328.5deg,
    #8cd17d 0 339deg,
    #b6992d 0 349.4deg,
    #86bcb6 0 360deg
  );
}

/* labels around the pie, offsets are from the plot's corner */
.pie-label {
  position: absolute;
  margin-left: 1px;
  color: #444;
  font-size: 12px;
  line-height: 16px;
  white-space: nowrap;
  letter-spacing: 0.1px;
}

.lb-washing { left: 299px; top: 112px; }
.lb-security { left: 441px; top: 108px; }
.lb-vaastu { left: 260px; top: 130px; }
.lb-cafeteria { left: 516px; top: 144px; }
.lb-car { left: 529px; top: 161px; }
.lb-swimming { left: 245px; top: 161px; }
.lb-children { left: 539px; top: 180px; }
.lb-sports { left: 240px; top: 180px; }
.lb-sofa { left: 290px; top: 200px; }
.lb-club { left: 545px; top: 201px; }
.lb-shopping { left: 232px; top: 221px; }
.lb-dining { left: 547px; top: 222px; }
.lb-school { left: 277px; top: 259px; }
.lb-gas { left: 546px; top: 261px; }
.lb-fridge { left: 249px; top: 281px; }
.lb-golf { left: 540px; top: 281px; }
.lb-gym { left: 531px; top: 300px; }
.lb-rain { left: 200px; top: 301px; }
.lb-power { left: 261px; top: 318px; }
.lb-indoor { left: 504px; top: 333px; }
.lb-multi { left: 252px; top: 338px; }
.lb-staff { left: 297px; top: 355px; }
.lb-gardens { left: 445px; top: 358px; letter-spacing: 0; }

/* legends */
.legends {
  display: flex;
  flex-direction: column;
  flex: none;
  gap: 8px;
  width: 154px;
}

.legend-names {
  display: flex;
  flex-direction: column;
  height: 459px;
}

.legend-body {
  display: flex;
  flex: 1;
  min-height: 0;
  margin-top: 7px;
  background: #fff;
  overflow: hidden;
}

.legend-list {
  flex: 1;
  min-width: 0;
  margin: 0;
  padding: 0 0 0 3px;
  list-style: none;
  letter-spacing: 0.1px;
}

.legend-list li {
  display: flex;
  align-items: center;
  height: 20px;
  white-space: nowrap;
}

.sw {
  flex: none;
  width: 14px;
  height: 14px;
  margin-right: 5px;
}

.c-blue { background: #a0cbe8; }
.c-peach { background: #ffbe7d; }
.c-lime { background: #8cd17d; }
.c-yellow { background: #f1ce63; }
.c-teal { background: #499894; }
.c-mint { background: #86bcb6; }
.c-salmon { background: #ff9d9a; }
.c-umber { background: #79706e; }
.c-rose { background: #d37295; }
.c-pink { background: #fabfd2; }
.c-plum { background: #b07aa1; }
.c-lilac { background: #d4a6c8; }
.c-red { background: #e15759; }
.c-brown { background: #9d7660; }
.c-tan { background: #d7b5a6; }
.c-green { background: #59a14f; }
.c-orange { background: #f28e2b; }

.scroll-legend {
  margin: 0 1px 0 0;
}

.legend-values {
  height: 52px;
}

.size-row {
  display: flex;
  align-items: center;
  gap: 5px;
  margin-top: 7px;
  padding-left: 3px;
  background: #fff;
  height: 20px;
  letter-spacing: 0.35px;
}

.size-bar {
  width: 81px;
  height: 18px;
  border-left: 2px solid #aaa;
  border-right: 2px solid #aaa;
  border-radius: 6px / 9px;
  background: #d0d0d0;
}

/* sheet tabs */
.tabs {
  display: flex;
  flex: none;
  height: 30px;
  border-top: 1px solid #d4d4d4;
  background: #e8e8e8;
}

.tab {
  display: flex;
  align-items: center;
  justify-content: center;
  flex: none;
  gap: 5px;
  width: 57px;
  border-right: 1px solid #d4d4d4;
  color: #666;
  letter-spacing: -0.1px;
}

.tab-source {
  justify-content: flex-start;
  width: 131px;
  padding-left: 7px;
}

.tab-sheet1 {
  width: 53px;
}

.tab-on {
  background: #fafafa;
  color: #333;
  font-weight: 600;
}

.tab-dash {
  width: 104px;
}

.tab-dash:nth-child(11) {
  width: 101px;
}

.tab-story {
  width: 70px;
}

.tab-add {
  width: 33px;
}

.status {
  display: flex;
  align-items: center;
  flex: none;
  height: 19px;
  padding-left: 3px;
  border-top: 1px solid #d4d4d4;
  background: #e8e8e8;
  color: #555;
  font-size: 11px;
  letter-spacing: -0.1px;
}

.st-marks {
  width: 64px;
}

.st-rows {
  width: 106px;
  letter-spacing: -0.3px;
}

.st-user {
  display: flex;
  align-items: center;
  width: 128px;
  height: 100%;
  margin-left: auto;
  padding-left: 4px;
  border-left: 1px solid #d4d4d4;
  border-right: 1px solid #d4d4d4;
}

.st-name {
  width: 89px;
  margin-left: 10px;
  letter-spacing: 0.25px;
}

.st-cell {
  width: 27px;
  height: 100%;
  border-right: 1px solid #d4d4d4;
}

.st-nav {
  display: flex;
  gap: 6px;
  align-items: center;
  width: 118px;
  height: 100%;
  padding-left: 53px;
  border-right: 1px solid #d4d4d4;
}

.st-views {
  display: flex;
  align-items: center;
  gap: 9px;
  width: 68px;
  padding-left: 8px;
}
```
